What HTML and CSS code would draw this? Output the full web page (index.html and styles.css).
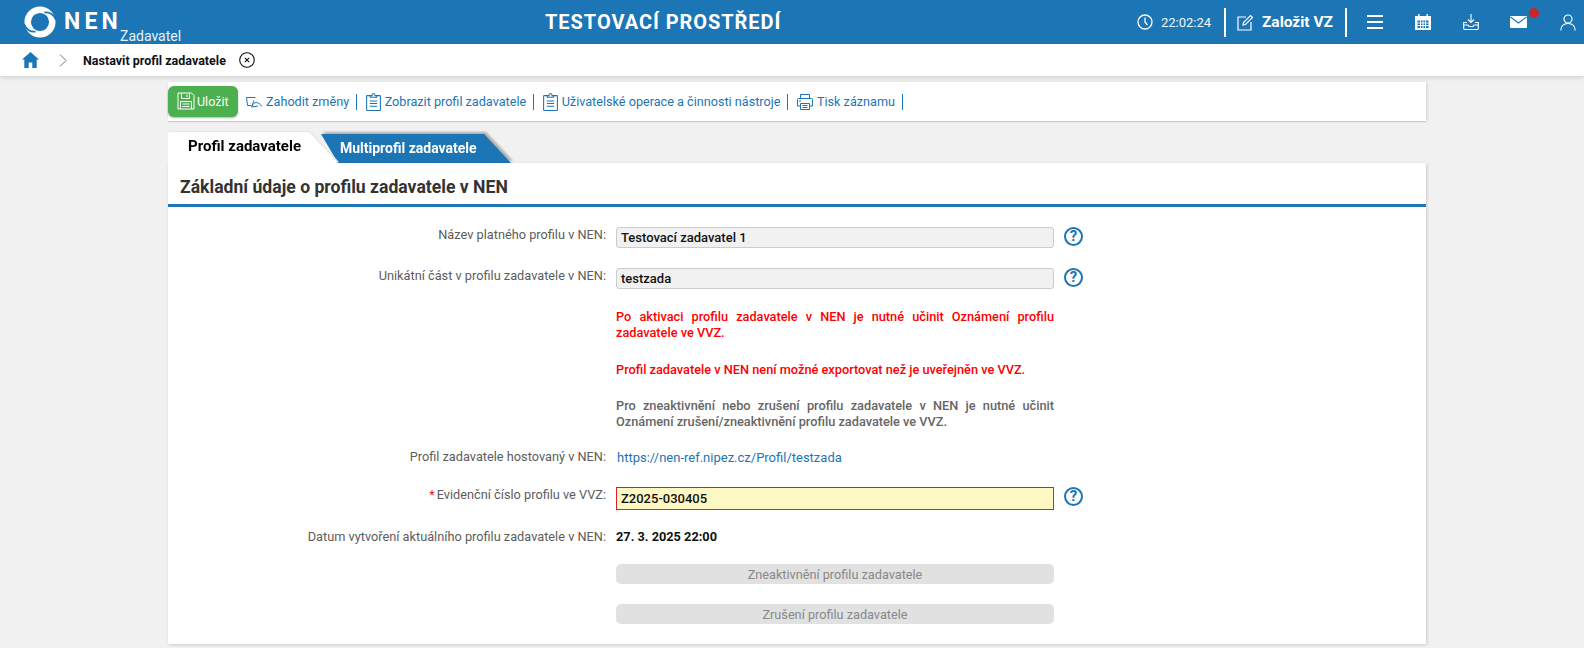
FILE: index.html
```html
<!DOCTYPE html>
<html lang="cs">
<head>
<meta charset="utf-8">
<title>NEN</title>
<link rel="stylesheet" href="styles.css">
</head>
<body>
<header class="top">
  <div class="brand">
    <svg class="logo" width="32" height="32" viewBox="0 0 32 32"><circle cx="16" cy="16" r="12.300" fill="none" stroke="#fff" stroke-width="6.500"/><path d="M32 14C30 8.500 25 5.500 20.500 6.500M0 18C2 23.500 7 26.500 11.500 25.500" fill="none" stroke="#1c75b4" stroke-width="1.800"/></svg>
    <span class="nen">NEN</span><span class="zad">Zadavatel</span>
  </div>
  <div class="env">TESTOVACÍ PROSTŘEDÍ</div>
  <div class="tools">
    <svg class="ic clock" width="16" height="16" viewBox="0 0 16 16" fill="none" stroke="#fff" stroke-width="1.300"><circle cx="8" cy="8" r="7"/><path d="M8 3.500V8L10.500 11"/></svg>
    <span class="time">22:02:24</span>
    <span class="vsep"></span>
    <svg class="ic pen" width="17" height="17" viewBox="0 0 17 17" fill="none" stroke="#fff" stroke-width="1.200"><path d="M9 3H1V16H14V8"/><path d="M6 11L6.500 8.500L13.500 1.500L15.500 3.500L8.500 10.500Z"/></svg>
    <span class="create">Založit VZ</span>
    <span class="vsep"></span>
    <svg class="menu" width="16" height="14" viewBox="0 0 16 14" fill="#fff"><rect y="0" width="16" height="2"/><rect y="6" width="16" height="2"/><rect y="12" width="16" height="2"/></svg>
    <svg class="cal" width="16" height="16" viewBox="0 0 16 16"><path d="M0 2H3V0H4.500V2H11.500V0H13V2H16V16H0Z" fill="#fff"/><path d="M2.500 6.500H13.500V14H2.500Z" fill="#1c75b4"/><path d="M2.500 9H13.500M2.500 11.500H13.500M5.500 6.500V14M8 6.500V14M10.500 6.500V14" stroke="#fff"/></svg>
    <svg class="dl" width="16" height="16" viewBox="0 0 16 16" fill="none" stroke="#fff" stroke-width="1.100"><path d="M8 0V8M5 5.500L8 8.500L11 5.500"/><path d="M4 8.500H.700V14.500Q.700 15.500 1.700 15.500H14.300Q15.300 15.500 15.300 14.500V8.500H12"/><path d="M.7 11H5L6 12.500H10L11 11H15.300"/></svg>
    <span class="mailwrap">
      <svg width="17" height="12" viewBox="0 0 17 12"><rect width="17" height="12" rx="1" fill="#fff"/><path d="M.5 1L8.500 7L16.500 1" fill="none" stroke="#1c75b4" stroke-width="1.100"/></svg>
      <span class="dot"></span>
    </span>
    <svg class="user" width="16" height="17" viewBox="0 0 16 17" fill="none" stroke="#fff" stroke-width="1.200"><circle cx="8" cy="5" r="4"/><path d="M.8 16.500C1 12 4 9.500 8 9.500S15 12 15.200 16.500"/></svg>
  </div>
</header>
<nav class="crumb">
  <svg class="home" width="17" height="16" viewBox="0 0 17 16"><path d="M8.500 0L17 7.500H14.700V16H10.300V10.500H6.700V16H2.300V7.500H0Z" fill="#1c75b4"/></svg>
  <svg class="chev" width="8" height="13" viewBox="0 0 8 13" fill="none" stroke="#777" stroke-width="1"><path d="M1 .5L7 6.500L1 12.500"/></svg>
  <b class="crumbtext">Nastavit profil zadavatele</b>
  <svg class="xc" width="16" height="16" viewBox="0 0 16 16" fill="none" stroke="#111" stroke-width="1.100"><circle cx="8" cy="8" r="7.300"/><path d="M5.800 5.800L10.200 10.200M10.200 5.800L5.800 10.200"/></svg>
</nav>
<main class="wrap">
  <div class="toolbar">
    <button class="save" type="button">
      <svg width="18" height="18" viewBox="0 0 18 18" fill="none" stroke="#fff" stroke-width="1"><path d="M1 1H14.500L17 3.500V17H1Z"/><path d="M4.500 1V6.500H12.500V1M10 2.500V5"/><path d="M3.500 17V9.500H14.500V17M5.500 12H12.500M5.500 14.500H12.500"/></svg>
      Uložit
    </button>
    <span class="tool first">
      <svg width="17" height="12" viewBox="0 0 17 12" fill="none" stroke="#1c75b4" stroke-width="1"><path d="M5 9.500H1.500L.5 1.500H9.500"/><path d="M6 10.500C7.500 5.500 12 5 16 10.500M8 4.500L5.500 11L12 10"/></svg>
      Zahodit změny
    </span>
    <span class="tsep"></span>
    <span class="tool">
      <svg class="clip" width="15" height="18" viewBox="0 0 14 17" fill="none" stroke="#1c75b4" stroke-width="1"><path d="M4 2.500H1Q.5 2.500 .5 3V16Q.5 16.500 1 16.500H13Q13.500 16.500 13.500 16V3Q13.500 2.500 13 2.500H10"/><path d="M4 4V2.500H5.500Q5.500 .5 7 .5T8.500 2.500H10V4Z"/><path d="M3.500 7.500H10.500M3.500 10H10.500M3.500 12.500H10.500"/></svg>
      Zobrazit profil zadavatele
    </span>
    <span class="tsep"></span>
    <span class="tool">
      <svg class="clip" width="15" height="18" viewBox="0 0 14 17" fill="none" stroke="#1c75b4" stroke-width="1"><path d="M4 2.500H1Q.5 2.500 .5 3V16Q.5 16.500 1 16.500H13Q13.500 16.500 13.500 16V3Q13.500 2.500 13 2.500H10"/><path d="M4 4V2.500H5.500Q5.500 .5 7 .5T8.500 2.500H10V4Z"/><path d="M3.500 7.500H10.500M3.500 10H10.500M3.500 12.500H10.500"/></svg>
      Uživatelské operace a činnosti nástroje
    </span>
    <span class="tsep"></span>
    <span class="tool">
      <svg width="16" height="16" viewBox="0 0 16 16" fill="none" stroke="#1c75b4" stroke-width="1"><path d="M3.500 4.500V.5H12.500V4.500"/><path d="M3.500 12H.5V5.500Q.5 4.500 1.500 4.500H14.500Q15.500 4.500 15.500 5.500V12H12.500"/><path d="M3.500 9.500H12.500V15.500H3.500ZM2 7H4M5.500 11.500H10.500M5.500 13.500H10.500"/></svg>
      Tisk záznamu
    </span>
    <span class="tsep"></span>
  </div>
  <div class="tabs">
    <div class="tabwrap first"><div class="tab active">Profil zadavatele</div></div>
    <div class="tabwrap second"><div class="tab other">Multiprofil zadavatele</div></div>
  </div>
  <section class="panel">
    <h1 class="title">Základní údaje o profilu zadavatele v NEN</h1>
    <div class="form">
      <div class="row r1">
        <label class="lab">Název platného profilu v NEN:</label>
        <div class="input">Testovací zadavatel 1</div>
        <span class="help">?</span>
      </div>
      <div class="row r2">
        <label class="lab">Unikátní část v profilu zadavatele v NEN:</label>
        <div class="input">testzada</div>
        <span class="help">?</span>
      </div>
      <p class="note red n1">Po aktivaci profilu zadavatele v NEN je nutné učinit Oznámení profilu zadavatele ve VVZ.</p>
      <p class="note red n2">Profil zadavatele v NEN není možné exportovat než je uveřejněn ve VVZ.</p>
      <p class="note gray n3">Pro zneaktivnění nebo zrušení profilu zadavatele v NEN je nutné učinit Oznámení zrušení/zneaktivnění profilu zadavatele ve VVZ.</p>
      <div class="row r3">
        <label class="lab">Profil zadavatele hostovaný v NEN:</label>
        <a class="link" href="#">https://nen-ref.nipez.cz/Profil/testzada</a>
      </div>
      <div class="row r4">
        <label class="lab"><span class="star">*</span>Evidenční číslo profilu ve VVZ:</label>
        <div class="input err">Z2025-030405</div>
        <span class="help">?</span>
      </div>
      <div class="row r5">
        <label class="lab">Datum vytvoření aktuálního profilu zadavatele v NEN:</label>
        <b class="val">27. 3. 2025 22:00</b>
      </div>
      <div class="dis d1">Zneaktivnění profilu zadavatele</div>
      <div class="dis d2">Zrušení profilu zadavatele</div>
    </div>
  </section>
</main>
</body>
</html>
```

FILE: styles.css
```css
* { box-sizing: border-box; }
html, body { margin: 0; height: 648px; overflow: hidden; }
body { background: #f1f1f1; font-family: Roboto, "Liberation Sans", sans-serif; font-size: 13px; color: #111; }

.top { height: 44px; background: #1c75b4; color: #fff; display: flex; align-items: center; }
.brand { display: flex; align-items: flex-start; height: 44px; padding: 6px 0 0 24px; width: 545px; flex: none; }
.logo { display: block; }
.nen { font-size: 23px; font-weight: 700; letter-spacing: 4.200px; line-height: 28px; margin: 2px 0 0 8px; }
.zad { font-size: 14px; line-height: 16px; margin: 22px 0 0 -2px; color: #e8f2f9; }
.env { font-size: 20px; font-weight: 700; letter-spacing: .95px; line-height: 24px; white-space: nowrap; }
.tools { margin-left: auto; display: flex; align-items: center; height: 44px; }
.ic { display: block; }
.clock { margin-right: 8px; }
.time { font-size: 13px; width: 50px; white-space: nowrap; color: #f2f8fc; }
.vsep { width: 2px; height: 29px; background: #fff; }
.time + .vsep { margin: 0 11px 0 13px; }
.pen { margin-right: 1px; }
.create { font-size: 15.500px; font-weight: 700; margin: 0 12px 0 7px; white-space: nowrap; }
.menu { margin-left: 20px; }
.cal { margin-left: 32px; }
.dl { margin-left: 32px; }
.mailwrap { margin-left: 31px; width: 17px; height: 12px; position: relative; display: block; }
.mailwrap svg { display: block; }
.dot { position: absolute; left: 19px; top: -8px; width: 10px; height: 10px; border-radius: 50%; background: #c7282b; }
.user { margin: 0 8px 0 33px; }

.crumb { height: 32px; background: #fff; display: flex; align-items: center; padding-left: 22px; box-shadow: 0 2px 4px rgba(0,0,0,.12); position: relative; }
.chev { margin-left: 20px; }
.crumbtext { font-size: 12.500px; margin-left: 16px; font-weight: 700; color: #111; }
.xc { margin-left: 13px; }

.wrap { width: 1258px; margin: 6px 0 0 168px; }
.toolbar { height: 39px; background: #fff; display: flex; align-items: center; box-shadow: 0 1px 1px rgba(0,0,0,.14), 2px 0 3px rgba(0,0,0,.08); white-space: nowrap; }
.save { width: 70px; height: 31px; margin-top: -1px; background: #4caf50; color: #fff; border: 0; border-radius: 6px; font: 12.500px Roboto, sans-serif; display: flex; align-items: center; gap: 2px; padding: 0 0 0 9px; box-shadow: 0 1px 2px rgba(0,0,0,.3); flex: none; }
.tool { display: flex; align-items: center; gap: 4px; color: #1c75b4; font-size: 12.650px; }
.tool.first { margin-left: 8px; gap: 3px; }
.tsep { width: 1px; height: 16px; background: #1c75b4; margin: 0 8.500px 0 7px; }
.tabs { display: flex; height: 31px; margin-top: 11px; align-items: flex-end; }
.tabwrap { flex: none; }
.tabwrap.first { width: 170px; filter: drop-shadow(1px -1px 0 #e6e6e6); position: relative; z-index: 1; }
.tabwrap.second { width: 190px; margin-left: -17px; filter: drop-shadow(2px -2px 1px rgba(0,0,0,.28)); }
.tab { font-weight: 700; white-space: nowrap; }
.tab.active { width: 170px; height: 31px; background: #fff; clip-path: polygon(0 0, 141px 0, 170px 31px, 0 31px); padding: 5px 0 0 20px; font-size: 15px; line-height: 18px; color: #000; }
.tab.other { width: 190px; height: 29px; background: #1c75b4; clip-path: polygon(0 0, 163px 0, 190px 29px, 17px 29px); color: #fff; font-size: 14px; line-height: 17px; padding: 6px 0 0 19px; }
.panel { background: #fff; height: 481px; box-shadow: 1px 1px 3px rgba(0,0,0,.16); position: relative; }
.title { margin: 0; font-size: 17.600px; font-weight: 700; color: #333; line-height: 24px; padding: 12px 0 0 12px; border-bottom: 3px solid #1c75b4; box-sizing: content-box; height: 29px; }
.form { padding-top: 20px; }
.row { display: flex; align-items: flex-start; min-height: 21px; }
.lab { width: 438px; text-align: right; color: #5c5c5c; font-size: 12.750px; line-height: 16px; margin-right: 10px; flex: none; white-space: nowrap; }
.input { width: 438px; height: 21px; background: #f1f1f1; border: 1px solid #ccc; border-radius: 3px; font-size: 13px; font-weight: 500; color: #111; line-height: 19px; padding-left: 4px; }
.input.err { background: #fdf8c2; border: 1px solid #e21c2c; border-radius: 0; height: 23px; line-height: 21px; }
.help { width: 19px; height: 19px; margin-left: 10px; border: 2px solid #1c75b4; border-radius: 50%; color: #1c75b4; font-size: 15px; font-weight: 700; line-height: 15px; text-align: center; }
.r2 { margin-top: 20px; }
.note { width: 438px; margin: 0 0 0 448px; font-size: 12.750px; line-height: 16px; font-weight: 500; text-align: justify; }
.red { color: #fe0000; }
.gray { color: #666; }
.n1 { margin-top: 20px; }
.n2 { margin-top: 21px; }
.n3 { margin-top: 20px; }
.r3 { margin-top: 19px; }
.link { color: #1c75b4; text-decoration: none; font-size: 13px; line-height: 18px; margin-left: 1px; }
.r4 { margin-top: 17px; }
.star { color: #d9202c; margin-right: 2px; }
.r5 { margin-top: 19px; }
.val { font-size: 12.750px; font-weight: 700; color: #111; line-height: 16px; }
.dis { width: 438px; height: 20px; margin-left: 448px; background: #e1e1e1; border-radius: 5px; color: #888; font-size: 12.700px; line-height: 21px; text-align: center; }
.d1 { margin-top: 14px; }
.d2 { margin-top: 20px; }
```
